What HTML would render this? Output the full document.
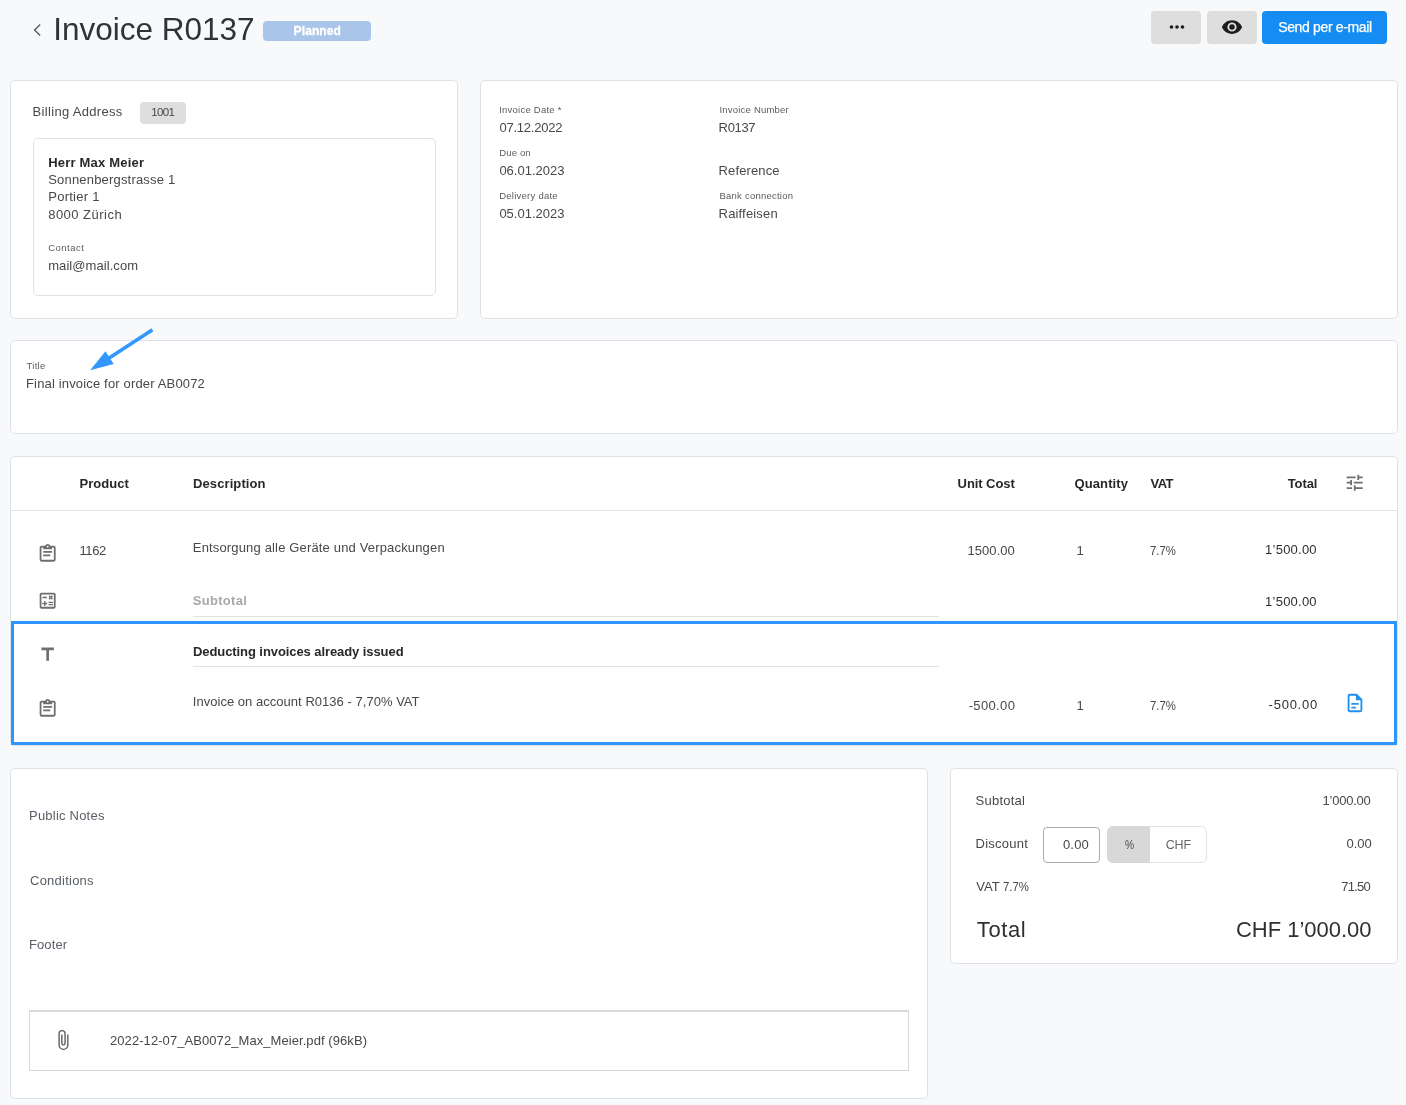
<!DOCTYPE html>
<html lang="en">
<head>
<meta charset="utf-8">
<title>Invoice R0137</title>
<style>
*{box-sizing:border-box;margin:0;padding:0}
html,body{width:1406px;height:1105px;overflow:hidden}
body{background:#f8f9fb;font-family:"Liberation Sans",sans-serif;color:#484848;position:relative;font-size:13px}
.n{color:#5a6068}
.t{position:absolute;white-space:nowrap;line-height:1;transform-origin:0 50%}
.r{text-align:right}
.card{position:absolute;background:#fff;border:1px solid #dee2e7;border-radius:5px}
.lbl{font-size:9.5px;color:#5c5c5c}
.b{font-weight:bold;color:#282828}
svg{position:absolute;overflow:visible}
</style>
</head>
<body>
<div id="root" style="position:absolute;left:0;top:0;width:1406px;height:1105px;will-change:transform">
<!-- HEADER -->
<svg id="back" style="left:30px;top:20px" width="14" height="20" viewBox="0 0 14 20"><path d="M10.2 4.6 L4.6 10 L10.2 15.4" fill="none" stroke="#5a5a5a" stroke-width="1.4"/></svg>
<div class="t" id="title" style="left:53.2px;letter-spacing:0px;top:13.5px;font-size:31.5px;color:#303234">Invoice R0137</div>
<div id="badge" style="position:absolute;left:263px;top:21px;width:108px;height:20px;background:#a9c6ea;border-radius:4px"></div>
<div class="t" id="badget" style="left:293.6px;letter-spacing:0.1px;top:25.2px;font-size:12px;font-weight:bold;color:#fff;-webkit-text-stroke:0.35px #fff">Planned</div>

<div id="btn1" style="position:absolute;left:1151px;top:11px;width:50px;height:33px;background:#dedede;border-radius:4px"></div>
<div id="btn2" style="position:absolute;left:1207px;top:11px;width:50px;height:33px;background:#dedede;border-radius:4px"></div>
<div id="btn3" style="position:absolute;left:1262px;top:11px;width:125px;height:33px;background:#148cf2;border-radius:4px"></div>
<div class="t" id="btn3t" style="left:1278.2px;letter-spacing:-0.35px;top:20.4px;font-size:14px;color:#fff;-webkit-text-stroke:0.25px #fff">Send per e-mail</div>


<svg id="idots" style="left:1165.5px;top:15.8px" width="22" height="22" viewBox="0 0 24 24"><path fill="#1c1c1c" d="M16,12A2,2 0 0,1 18,10A2,2 0 0,1 20,12A2,2 0 0,1 18,14A2,2 0 0,1 16,12M10,12A2,2 0 0,1 12,10A2,2 0 0,1 14,12A2,2 0 0,1 12,14A2,2 0 0,1 10,12M4,12A2,2 0 0,1 6,10A2,2 0 0,1 8,12A2,2 0 0,1 6,14A2,2 0 0,1 4,12Z"/></svg>
<svg id="ieye" style="left:1221px;top:15.6px" width="22" height="22" viewBox="0 0 24 24"><path fill="#1c1c1c" d="M12,9A3,3 0 0,0 9,12A3,3 0 0,0 12,15A3,3 0 0,0 15,12A3,3 0 0,0 12,9M12,17A5,5 0 0,1 7,12A5,5 0 0,1 12,7A5,5 0 0,1 17,12A5,5 0 0,1 12,17M12,4.5C7,4.5 2.73,7.61 1,12C2.73,16.39 7,19.5 12,19.5C17,19.5 21.27,16.39 23,12C21.27,7.61 17,4.5 12,4.5Z"/></svg>

<!-- CARD 1 -->
<div class="card" id="c1" style="left:10px;top:80px;width:448px;height:239px"></div>
<div class="t" id="ba" style="left:32.6px;letter-spacing:0.32px;top:105px;font-size:13px">Billing Address</div>
<div id="b1001" style="position:absolute;left:140px;top:102px;width:46px;height:22px;background:#dedede;border-radius:4px"></div>
<div class="t" id="b1001t" style="left:151.2px;letter-spacing:-0.60px;top:107px;font-size:11.5px">1001</div>
<div class="card" id="c1i" style="left:33px;top:138px;width:403px;height:158px"></div>
<div class="t b" id="a1" style="left:48.2px;letter-spacing:0.20px;top:156px">Herr Max Meier</div>
<div class="t" id="a2" style="left:48.2px;letter-spacing:0.19px;top:173px">Sonnenbergstrasse 1</div>
<div class="t" id="a3" style="left:48.2px;letter-spacing:0.27px;top:190px">Portier 1</div>
<div class="t" id="a4" style="left:48.2px;letter-spacing:0.48px;top:208px">8000 Zürich</div>
<div class="t lbl" id="a5" style="left:48.2px;letter-spacing:0.50px;top:243px">Contact</div>
<div class="t" id="a6" style="left:48.2px;letter-spacing:0.07px;top:259px">mail@mail.com</div>

<!-- CARD 2 -->
<div class="card" id="c2" style="left:480px;top:80px;width:918px;height:239px"></div>
<div class="t lbl" id="d1l" style="left:499.2px;letter-spacing:0.24px;top:105px">Invoice Date *</div>
<div class="t" id="d1" style="left:499.4px;letter-spacing:-0.22px;top:121px">07.12.2022</div>
<div class="t lbl" id="d2l" style="left:499.2px;letter-spacing:0.16px;top:148px">Due on</div>
<div class="t" id="d2" style="left:499.4px;letter-spacing:0.00px;top:164px">06.01.2023</div>
<div class="t lbl" id="d3l" style="left:499.2px;letter-spacing:0.25px;top:191px">Delivery date</div>
<div class="t" id="d3" style="left:499.4px;letter-spacing:0.00px;top:207px">05.01.2023</div>
<div class="t lbl" id="e1l" style="left:719.5px;letter-spacing:0.21px;top:105px">Invoice Number</div>
<div class="t" id="e1" style="left:718.6px;letter-spacing:-0.34px;top:121px">R0137</div>
<div class="t" id="e2" style="left:718.6px;letter-spacing:0.12px;top:164px">Reference</div>
<div class="t lbl" id="e3l" style="left:719.5px;letter-spacing:0.23px;top:191px">Bank connection</div>
<div class="t" id="e3" style="left:718.6px;letter-spacing:0.16px;top:207px">Raiffeisen</div>

<!-- TITLE CARD -->
<div class="card" id="c3" style="left:10px;top:340px;width:1388px;height:94px"></div>
<div class="t lbl" id="tl" style="left:26.5px;letter-spacing:0.30px;top:360.5px">Title</div>
<div class="t" id="tv" style="left:26.0px;letter-spacing:0.16px;top:377px">Final invoice for order AB0072</div>
<svg id="arrow" style="left:0;top:0" width="200" height="400" viewBox="0 0 200 400"><path d="M152.5 329.7 L108 358.7" stroke="#3397fd" stroke-width="3.6" fill="none"/><path d="M90.1 370.3 L105.5 351.2 L113.7 363.9 Z" fill="#3397fd"/></svg>

<!-- TABLE CARD -->
<div class="card" id="c4" style="left:10px;top:456px;width:1388px;height:290px"></div>
<div id="hline" style="position:absolute;left:11px;top:510px;width:1386px;height:1px;background:#dfe2e6"></div>
<div class="t b" id="h1" style="left:79.4px;letter-spacing:0.07px;top:477px">Product</div>
<div class="t b" id="h2" style="left:193.0px;letter-spacing:0.10px;top:477px">Description</div>
<div class="t b r" id="h3" style="left:957.6px;letter-spacing:-0.08px;top:477px">Unit Cost</div>
<div class="t b" id="h4" style="left:1074.6px;letter-spacing:0.08px;top:477px">Quantity</div>
<div class="t b" id="h5" style="left:1150.6px;letter-spacing:-0.60px;top:477px">VAT</div>
<div class="t b r" id="h6" style="left:1287.7px;letter-spacing:-0.10px;top:477px">Total</div>

<svg id="itune" style="left:1344.4px;top:472.2px" width="21.4" height="21.4" viewBox="0 0 24 24"><path fill="#6e6e6e" d="M3,17V19H9V17H3M3,5V7H13V5H3M13,21V19H21V17H13V15H11V21H13M7,9V11H3V13H7V15H9V9H7M21,13V11H11V13H21M15,9H17V7H21V5H17V3H15V9Z"/></svg>
<svg id="iclip1" style="left:36.9px;top:543.2px" width="21.3" height="21.3" viewBox="0 0 24 24"><path fill="#6e6e6e" d="M19,3H14.82C14.4,1.84 13.3,1 12,1C10.7,1 9.6,1.84 9.18,3H5A2,2 0 0,0 3,5V19A2,2 0 0,0 5,21H19A2,2 0 0,0 21,19V5A2,2 0 0,0 19,3M12,3A1,1 0 0,1 13,4A1,1 0 0,1 12,5A1,1 0 0,1 11,4A1,1 0 0,1 12,3M7,7H17V5H19V19H5V5H7V7M17,11H7V9H17V11M15,15H7V13H15V15Z"/></svg>
<svg id="icalc" style="left:36.9px;top:590.3px" width="21.3" height="21.3" viewBox="0 0 24 24"><path fill="#6e6e6e" d="M19 3H5C3.9 3 3 3.9 3 5V19C3 20.1 3.9 21 5 21H19C20.1 21 21 20.1 21 19V5C21 3.9 20.1 3 19 3M19 19H5V5H19V19M6.2 7.7H11.2V9.2H6.2V7.7M13 15.8H18V17.3H13V15.8M13 13.2H18V14.7H13V13.2M8 18H9.5V16H11.5V14.5H9.5V12.5H8V14.5H6V16H8V18M14.1 10.9L15.5 9.5L16.9 10.9L18 9.9L16.6 8.5L18 7.1L16.9 6L15.5 7.4L14.1 6L13 7.1L14.4 8.5L13 9.9L14.1 10.9Z"/></svg>
<div class="t" id="r1a" style="left:79.4px;letter-spacing:-0.34px;top:544px">1162</div>
<div class="t" id="r1b" style="left:192.8px;letter-spacing:0.16px;top:541px">Entsorgung alle Geräte und Verpackungen</div>
<div class="t r" id="r1c" style="left:967.6px;letter-spacing:0.03px;top:544px">1500.00</div>
<div class="t" id="r1d" style="left:1076.6px;letter-spacing:0px;top:544px">1</div>
<div class="t" id="r1e" style="left:1150.2px;top:544px;transform:scaleX(.875)">7.7%</div>
<div class="t r" id="r1f" style="left:1265.1px;letter-spacing:0.23px;top:543px;color:#2e2e2e">1’500.00</div>

<div class="t" id="r2b" style="left:192.8px;letter-spacing:0.29px;top:594px;font-weight:bold;color:#a9a9a9">Subtotal</div>
<div id="ul1" style="position:absolute;left:193px;top:616px;width:746px;height:1px;background:#e3e3e3"></div>
<div class="t r" id="r2f" style="left:1265.1px;letter-spacing:0.23px;top:595px;color:#2e2e2e">1’500.00</div>

<div id="bluebox" style="position:absolute;left:11px;top:621px;width:1386px;height:124px;border:3px solid #2f94fb;background:#fff"></div>
<svg id="ititle" style="left:36.8px;top:643.8px" width="21.3" height="21.3" viewBox="0 0 24 24"><path fill="#6e6e6e" d="M5,4V7H10.5V19H13.5V7H19V4H5Z"/></svg>
<svg id="iclip2" style="left:36.9px;top:697.7px" width="21.3" height="21.3" viewBox="0 0 24 24"><path fill="#6e6e6e" d="M19,3H14.82C14.4,1.84 13.3,1 12,1C10.7,1 9.6,1.84 9.18,3H5A2,2 0 0,0 3,5V19A2,2 0 0,0 5,21H19A2,2 0 0,0 21,19V5A2,2 0 0,0 19,3M12,3A1,1 0 0,1 13,4A1,1 0 0,1 12,5A1,1 0 0,1 11,4A1,1 0 0,1 12,3M7,7H17V5H19V19H5V5H7V7M17,11H7V9H17V11M15,15H7V13H15V15Z"/></svg>
<svg id="idoc" style="left:1343.9px;top:691.8px" width="22" height="22" viewBox="0 0 24 24"><path fill="#1e90f4" d="M6,2A2,2 0 0,0 4,4V20A2,2 0 0,0 6,22H18A2,2 0 0,0 20,20V8L14,2H6M6,4H13V9H18V20H6V4M8,12V14H16V12H8M8,16V18H13V16H8Z"/></svg>
<div class="t b" id="r3b" style="left:193.0px;letter-spacing:-0.08px;top:645px">Deducting invoices already issued</div>
<div id="ul2" style="position:absolute;left:193px;top:666px;width:746px;height:1px;background:#e3e3e3"></div>

<div class="t" id="r4b" style="left:192.8px;letter-spacing:0.03px;top:695px">Invoice on account R0136 - 7,70% VAT</div>
<div class="t r" id="r4c" style="left:968.7px;letter-spacing:0.35px;top:699px">-500.00</div>
<div class="t" id="r4d" style="left:1076.6px;top:699px">1</div>
<div class="t" id="r4e" style="left:1150.2px;top:699px;transform:scaleX(.875)">7.7%</div>
<div class="t r" id="r4f" style="left:1268.6px;letter-spacing:0.75px;top:698px;color:#2e2e2e">-500.00</div>

<!-- NOTES CARD -->
<div class="card" id="c5" style="left:10px;top:768px;width:918px;height:331px"></div>
<div class="t n" id="n1" style="left:29.0px;letter-spacing:0.22px;top:809px">Public Notes</div>
<div class="t n" id="n2" style="left:30.0px;letter-spacing:0.24px;top:874px">Conditions</div>
<div class="t n" id="n3" style="left:29.0px;letter-spacing:0.10px;top:938px">Footer</div>
<div id="att" style="position:absolute;left:29px;top:1010px;width:880px;height:61px;border:1px solid #d8d8d8;border-top:2px solid #dadada;background:#fff"></div>
<svg id="ipclip" style="left:52.1px;top:1028.75px" width="22" height="22" viewBox="0 0 24 24"><path fill="#5c5c5c" d="M16.5,6V17.5A4,4 0 0,1 12.5,21.5A4,4 0 0,1 8.5,17.5V5A2.5,2.5 0 0,1 11,2.5A2.5,2.5 0 0,1 13.5,5V15.5A1,1 0 0,1 12.5,16.5A1,1 0 0,1 11.5,15.5V6H10V15.5A2.5,2.5 0 0,0 12.5,18A2.5,2.5 0 0,0 15,15.5V5A4,4 0 0,0 11,1A4,4 0 0,0 7,5V17.5A5.5,5.5 0 0,0 12.5,23A5.5,5.5 0 0,0 18,17.5V6H16.5Z"/></svg>
<div class="t" id="attt" style="left:110.0px;letter-spacing:0.07px;top:1034px">2022-12-07_AB0072_Max_Meier.pdf (96kB)</div>

<!-- TOTALS CARD -->
<div class="card" id="c6" style="left:950px;top:768px;width:448px;height:196px"></div>
<div class="t" id="s1" style="left:975.6px;letter-spacing:0.23px;top:794px">Subtotal</div>
<div class="t r" id="s1v" style="left:1322.5px;letter-spacing:-0.22px;top:794px">1’000.00</div>
<div class="t" id="s2" style="left:975.6px;letter-spacing:0.23px;top:837px">Discount</div>
<div id="inp" style="position:absolute;left:1043px;top:827px;width:57px;height:36px;border:1px solid #acacac;border-radius:4px;background:#fff"></div>
<div class="t r" id="inpt" style="left:1062.9px;letter-spacing:0.2px;top:838px">0.00</div>
<div id="tog" style="position:absolute;left:1107px;top:826px;width:100px;height:37px;border:1px solid #e2e2e2;border-radius:6px;background:#fff"></div>
<div id="togp" style="position:absolute;left:1107px;top:826px;width:43px;height:37px;border-radius:6px 0 0 6px;background:#d8d8d8"></div>
<div class="t" id="togpt" style="left:1124.6px;letter-spacing:0px;top:838.6px;font-size:12.5px;transform:scaleX(.82)">%</div>
<div class="t" id="togct" style="left:1165.8px;letter-spacing:-0.20px;top:839px;font-size:12.5px;color:#666">CHF</div>
<div class="t r" id="s2v" style="left:1346.5px;letter-spacing:0.00px;top:837px">0.00</div>
<div class="t" id="s3" style="left:976.3px;top:880px">VAT <span style="display:inline-block;transform:scaleX(.875);transform-origin:0 50%">7.7%</span></div>
<div class="t r" id="s3v" style="left:1341.3px;letter-spacing:-0.75px;top:880px">71.50</div>
<div class="t" id="s4" style="left:976.8px;letter-spacing:0.6px;top:919.0px;font-size:22px;color:#303030">Total</div>
<div class="t r" id="s4v" style="left:1236.0px;letter-spacing:-0.02px;top:919.0px;font-size:22px;color:#303030">CHF 1’000.00</div>
</div>
</body>
</html>
